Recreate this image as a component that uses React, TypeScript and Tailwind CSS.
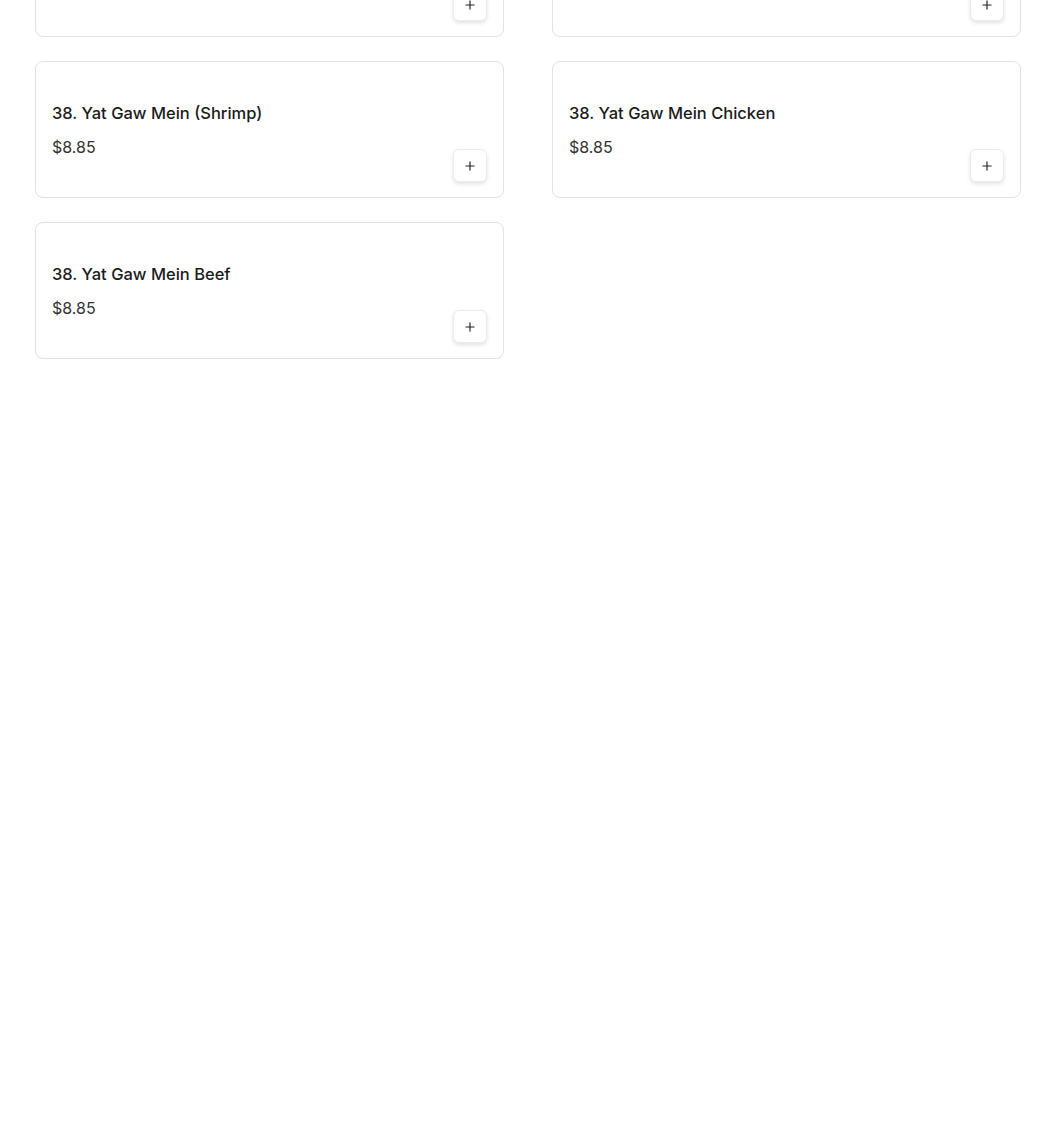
import { Plus } from "lucide-react"

const items = [
  { name: "38. Yat Gaw Mein (Shrimp)", price: "$8.85" },
  { name: "38. Yat Gaw Mein Chicken", price: "$8.85" },
  { name: "38. Yat Gaw Mein Beef", price: "$8.85" },
]

const AddButton = () => (
  <button className="w-[34px] h-[33px] flex items-center justify-center rounded-md border border-[#ececec] bg-white shadow-[0_2px_4px_rgba(0,0,0,0.12)]">
    <Plus size={14} strokeWidth={2} className="text-[#222]" />
  </button>
)

const MenuCard = ({ name, price }: { name?: string; price?: string }) => {
  return (
    <div className="h-[137px] border border-[#e2e2e2] rounded-lg bg-white px-4 pt-[39px] pb-[15px] flex justify-between items-end">
      <div className="self-start">
        {name && <div className="text-[16.5px] leading-6 font-medium text-[#1b1b1b]">{name}</div>}
        {price && <div className="mt-[10px] text-[16px] leading-6 text-[#333333]">{price}</div>}
      </div>
      <AddButton />
    </div>
  )
}

export default function App() {
  return (
    <div className="min-h-[1122px] bg-white overflow-hidden" style={{ fontFamily: "Inter, 'Noto Sans', sans-serif" }}>
      <div className="px-[35px] -mt-[100px] grid grid-cols-[469px_469px] gap-x-12 gap-y-6">
        {/* top row is scrolled out of view */}
        <MenuCard />
        <MenuCard />
        {items.map((it, i) => (
          <MenuCard key={i} name={it.name} price={it.price} />
        ))}
      </div>
    </div>
  )
}
